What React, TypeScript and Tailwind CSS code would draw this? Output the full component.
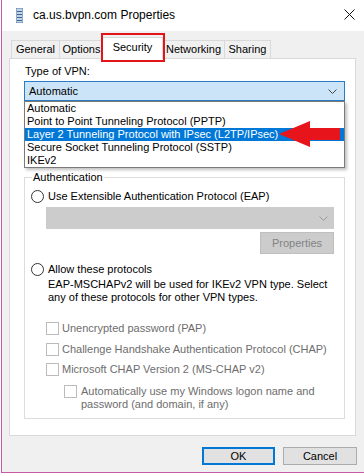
import React from "react";

const Radio = () => (
  <div className="w-[13px] h-[13px] rounded-full border border-[#333333] bg-white shrink-0" />
);

const Check = () => (
  <div className="w-[13px] h-[13px] border border-[#bcbcbc] bg-white shrink-0" />
);

export default function App() {
  return (
    <div className="w-[364px] h-[474px] bg-white flex font-['Liberation_Sans',Arial,sans-serif] text-[11px] leading-[13px] text-black relative overflow-hidden">
      <div className="w-[1px] h-full bg-white" />
      <div className="w-[1px] h-[473px] bg-[#c65aa5]" />
      <div className="flex-1 flex flex-col">
        {/* title bar */}
        <div className="h-[31px] bg-white flex items-center shrink-0 relative">
          <svg width="7" height="15" viewBox="0 0 7 15" className="ml-[14px]">
            <rect x="0" y="0" width="7" height="15" fill="#c3d3e6" />
            <rect x="0" y="0" width="7" height="15" fill="none" stroke="#5a80ad" strokeWidth="1" />
            <line x1="1" y1="3.5" x2="6" y2="3.5" stroke="#3e6799" />
            <line x1="1" y1="6.5" x2="6" y2="6.5" stroke="#3e6799" />
            <line x1="1" y1="9.5" x2="6" y2="9.5" stroke="#3e6799" />
            <line x1="1" y1="12.5" x2="6" y2="12.5" stroke="#3e6799" />
          </svg>
          <span className="ml-[10px] text-[12px] leading-[15px] mt-[-1px]">ca.us.bvpn.com Properties</span>
          <svg width="11" height="11" viewBox="0 0 11 11" className="absolute left-[342px] top-[9px]">
            <line x1="0.5" y1="0.5" x2="10.5" y2="10.5" stroke="#111" strokeWidth="1" />
            <line x1="10.5" y1="0.5" x2="0.5" y2="10.5" stroke="#111" strokeWidth="1" />
          </svg>
        </div>
        {/* body */}
        <div className="flex-1 bg-[#f0f0f0] px-[7px] pt-[6px] flex flex-col">
          {/* tabs */}
          <div className="flex items-end h-[22px] mb-[-1px] relative z-10">
            <div className="ml-[2px] w-[49px] h-[18px] mb-[1px] border border-b-0 border-[#d9d9d9] bg-[#f0f0f0] flex items-center justify-center">General</div>
            <div className="-ml-[1px] w-[45px] h-[18px] mb-[1px] border border-b-0 border-[#d9d9d9] bg-[#f0f0f0] flex items-center justify-center">Options</div>
            <div className="-ml-[2px] w-[61px] h-[22px] border border-b-0 border-[#d9d9d9] bg-white flex items-start pt-[3px] justify-center relative z-10">Security</div>
            <div className="-ml-[1px] w-[63px] h-[18px] mb-[1px] border border-b-0 border-[#d9d9d9] bg-[#f0f0f0] flex items-center justify-center">Networking</div>
            <div className="-ml-[1px] w-[47px] h-[18px] mb-[1px] border border-b-0 border-[#d9d9d9] bg-[#f0f0f0] flex items-center justify-center">Sharing</div>
          </div>
          {/* panel */}
          <div className="w-[347px] h-[378px] border border-[#d9d9d9] bg-white flex flex-col shrink-0">
            <div className="ml-[15px] mt-[6px]">Type of VPN:</div>
            <div className="relative ml-[14px] mt-[3px] w-[321px]">
              <div className="h-[20px] border border-[#2a7cc7] bg-[#cce4f7] flex items-center pl-[4px] justify-between pr-[7px]">
                <span>Automatic</span>
                <svg width="9" height="5" viewBox="0 0 9 5">
                  <polyline points="0.5,0.5 4.5,4.5 8.5,0.5" fill="none" stroke="#444" strokeWidth="1" />
                </svg>
              </div>
              <div className="absolute left-0 top-[20px] w-[321px] border border-[#7a7a7a] bg-white shadow-[2px_2px_3px_rgba(0,0,0,0.25)] z-20">
                <div className="pl-[2px] h-[13px]">Automatic</div>
                <div className="pl-[2px] h-[13px]">Point to Point Tunneling Protocol (PPTP)</div>
                <div className="pl-[2px] h-[13px] bg-[#0078d7] text-white">Layer 2 Tunneling Protocol with IPsec (L2TP/IPsec)</div>
                <div className="pl-[2px] h-[13px]">Secure Socket Tunneling Protocol (SSTP)</div>
                <div className="pl-[2px] h-[13px]">IKEv2</div>
              </div>
            </div>
            {/* group box */}
            <div className="ml-[14px] mt-[76px] w-[321px] h-[242px] border border-[#dcdcdc] flex flex-col">
              <div className="-mt-[7px] ml-[7px] px-[1px] bg-white w-fit">Authentication</div>
              <div className="mt-[6px] ml-[6px] flex items-center gap-[4px]">
                <Radio />
                <span>Use Extensible Authentication Protocol (EAP)</span>
              </div>
              <div className="mt-[4px] ml-[21px] w-[288px] h-[22px] bg-[#cccccc] border border-[#cccccc] flex items-center justify-end pr-[5px]">
                <svg width="9" height="5" viewBox="0 0 9 5">
                  <polyline points="0.5,0.5 4.5,4.5 8.5,0.5" fill="none" stroke="#9a9a9a" strokeWidth="1" />
                </svg>
              </div>
              <div className="mt-[3px] self-end mr-[10px] w-[74px] h-[22px] bg-[#cccccc] border border-[#bfbfbf] flex items-center justify-center text-[#838383]">Properties</div>
              <div className="mt-[9px] ml-[6px] flex items-center gap-[4px]">
                <Radio />
                <span>Allow these protocols</span>
              </div>
              <div className="mt-[2px] ml-[23px]">
                <div>EAP-MSCHAPv2 will be used for IKEv2 VPN type. Select</div>
                <div>any of these protocols for other VPN types.</div>
              </div>
              <div className="mt-[18px] ml-[21px] flex items-center gap-[3px] text-[#6d6d6d]">
                <Check />
                <span>Unencrypted password (PAP)</span>
              </div>
              <div className="mt-[8px] ml-[21px] flex items-center gap-[3px] text-[#6d6d6d]">
                <Check />
                <span>Challenge Handshake Authentication Protocol (CHAP)</span>
              </div>
              <div className="mt-[7px] ml-[21px] flex items-center gap-[3px] text-[#6d6d6d]">
                <Check />
                <span>Microsoft CHAP Version 2 (MS-CHAP v2)</span>
              </div>
              <div className="mt-[9px] ml-[39px] flex items-start gap-[4px] text-[#6d6d6d]">
                <Check />
                <div>
                  <div>Automatically use my Windows logon name and</div>
                  <div>password (and domain, if any)</div>
                </div>
              </div>
            </div>
          </div>
          {/* buttons */}
          <div className="mt-[11px] flex justify-end gap-[8px]">
            <div className="w-[73px] h-[18px] border-2 border-[#0078d7] bg-[#e1e1e1] flex items-center justify-center">OK</div>
            <div className="w-[74px] h-[18px] border border-[#adadad] bg-[#e1e1e1] flex items-center justify-center">Cancel</div>
          </div>
        </div>
        <div className="h-[1px] bg-[#c65aa5] shrink-0" />
        <div className="h-[1px] bg-white shrink-0" />
      </div>
      {/* red highlight box */}
      <div className="absolute left-[101px] top-[33px] w-[64px] h-[29px] border-2 border-[#e3151b] z-30" />
      {/* red arrow */}
      <svg width="62" height="27" viewBox="0 0 62 27" className="absolute left-[279px] top-[121px] z-30">
        <polygon points="0,13 31,0 31,7 61,7 61,19 31,19 31,26" fill="#e8141b" />
      </svg>
    </div>
  );
}
